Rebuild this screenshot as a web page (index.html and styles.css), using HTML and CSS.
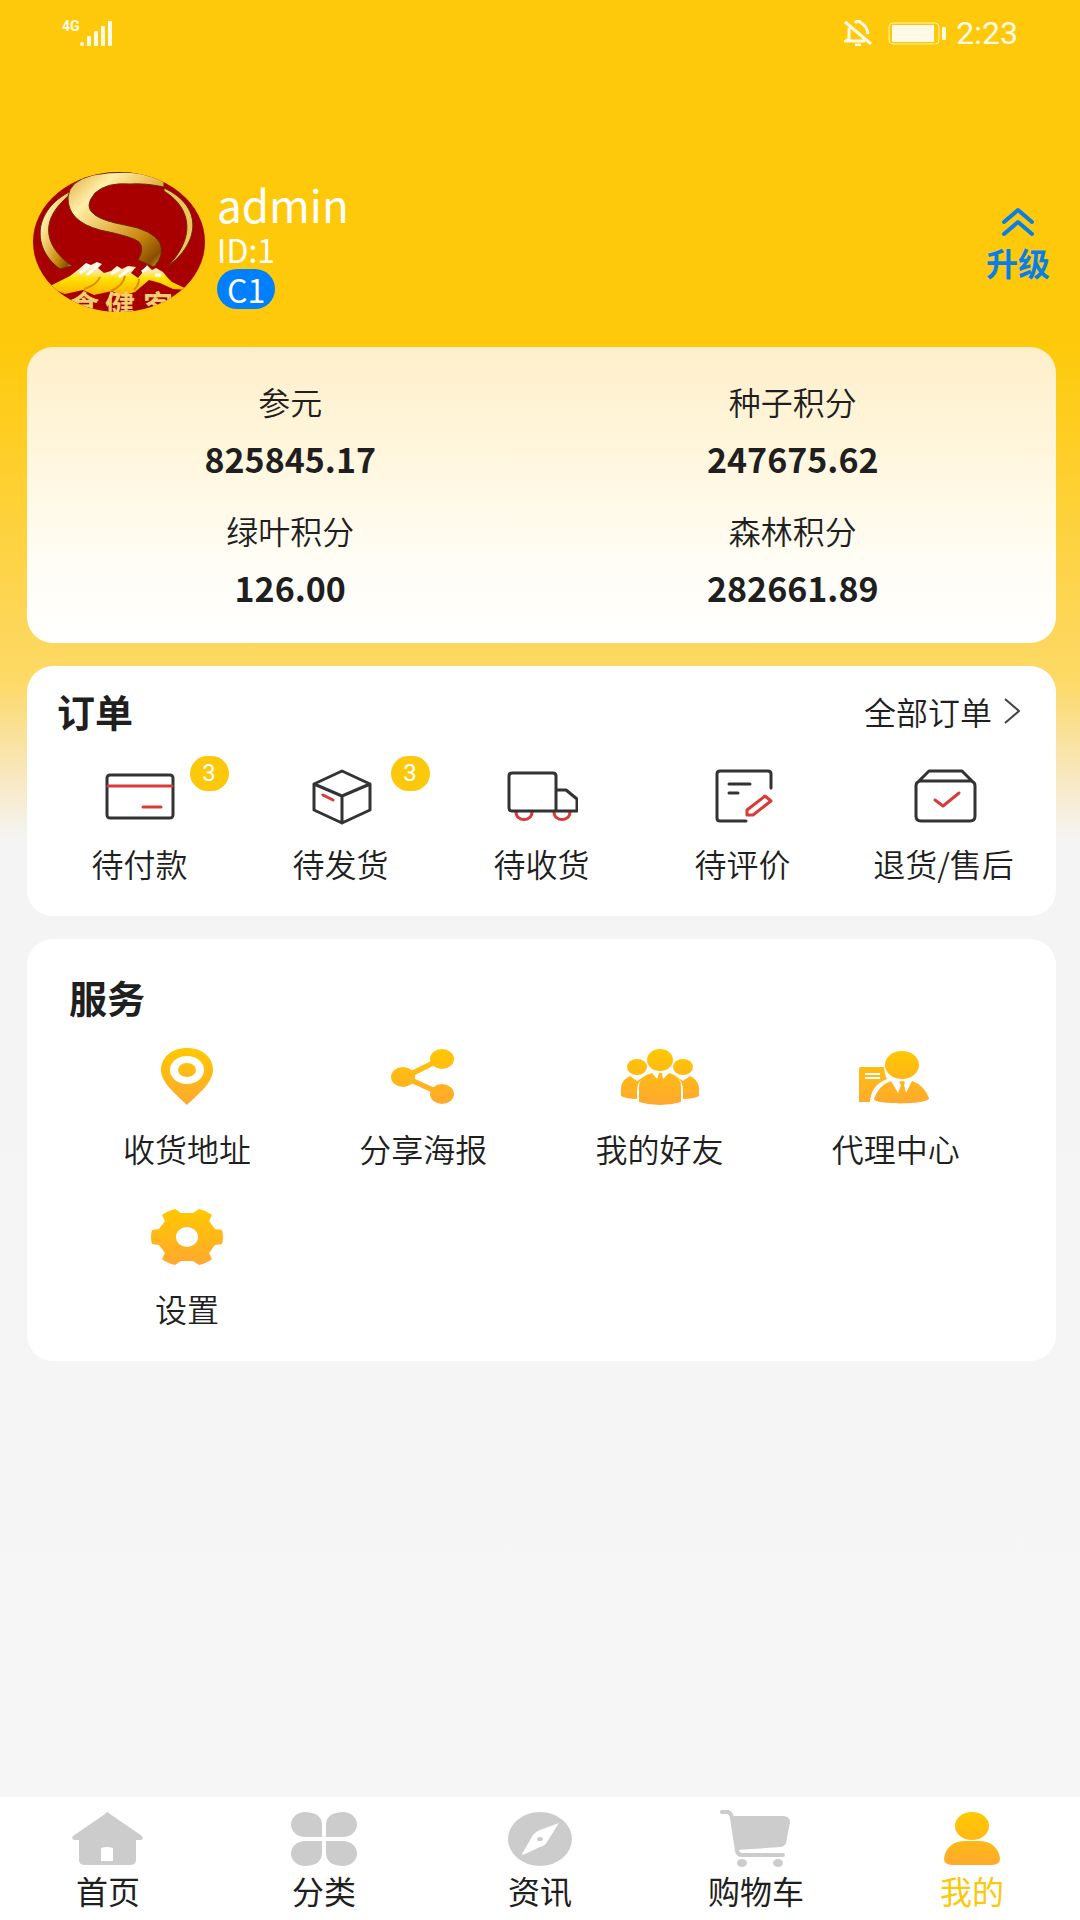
FILE: index.html
```html
<!DOCTYPE html>
<html lang="zh-CN">
<head>
<meta charset="utf-8">
<meta name="viewport" content="width=device-width, initial-scale=1">
<title>我的</title>
<link rel="stylesheet" href="styles.css">
</head>
<body>
<svg class="defs" aria-hidden="true">
  <defs>
    <linearGradient id="amber" gradientUnits="userSpaceOnUse" x1="0" y1="4" x2="0" y2="60">
      <stop offset="0" stop-color="#ffc800"/><stop offset="1" stop-color="#ffa830"/>
    </linearGradient>
    <linearGradient id="gold" x1="0" y1="0" x2="1" y2="1">
      <stop offset="0" stop-color="#e0a53c"/><stop offset=".25" stop-color="#fff0a8"/>
      <stop offset=".5" stop-color="#e8bb50"/><stop offset=".72" stop-color="#c8860c"/><stop offset=".9" stop-color="#8a4c00"/><stop offset="1" stop-color="#e8c050"/>
    </linearGradient>
    <linearGradient id="peak" x1="0" y1="0" x2="0" y2="1">
      <stop offset="0" stop-color="#fff"/><stop offset=".25" stop-color="#ffe9a8"/><stop offset=".5" stop-color="#ffe100"/><stop offset="1" stop-color="#ffae00"/>
    </linearGradient>
    <clipPath id="oval"><ellipse cx="86" cy="70" rx="86" ry="70"/></clipPath>
  </defs>
</svg>

<div class="app">
  <header class="status">
    <div class="status-side">
      <span class="network">4G</span>
      <svg width="32" height="25" viewBox="0 0 32 25" fill="#fffbe8"><circle cx="2" cy="23" r="2"/><rect x="7" y="15" width="4" height="10" rx="1"/><rect x="14" y="10" width="4" height="15" rx="1"/><rect x="21" y="5" width="4" height="20" rx="1"/><rect x="28" y="0" width="4" height="25" rx="1"/></svg>
    </div>
    <div class="status-side">
      <svg width="28" height="26" viewBox="0 0 28 26" fill="none" stroke="#fffbe8" stroke-width="3"><path d="M1 2L27 24M5 8V19L2 21H21M11 3Q14-1 17 3Q23 6 24 14M11 25H17"/></svg>
      <svg class="battery" width="58" height="23" viewBox="0 0 58 23"><rect x="1" y="1" width="50" height="21" rx="4" fill="none" stroke="#fff3b8"/><rect x="4" y="3" width="42" height="17" rx="1" fill="#fff9e6"/><rect x="54" y="5" width="4" height="13" rx="1" fill="#fff9e6"/></svg>
      <time class="clock">2:23</time>
    </div>
  </header>

  <main class="content">
    <section class="profile">
      <svg class="avatar" width="172" height="140" viewBox="0 0 172 140" role="img" aria-label="头像">
        <g clip-path="url(#oval)">
          <rect width="172" height="140" fill="#a80000"/>
          <path d="M38 19C0 38-2 76 27 97L39 94C8 72 8 45 38 22Z" fill="url(#gold)" stroke="#6a2a00"/>
          <path d="M131 16C170 34 168 70 134 95C162 67 160 37 131 19Z" fill="#eec45c" stroke="#6a2a00"/>
          <path d="M131 15Q112 11 97 12Q74 10 62 21Q50 35 62 43Q70 49 92 53Q120 58 127 71Q132 83 121 95L105 88Q112 76 106 70Q101 65 67 58Q34 49 35 25Q36 9 60 3Q90-3 131 4Z" fill="url(#gold)" stroke="#6a2a00"/>
          <path d="M15 115L37 104L46 97L53 91L58 93L64 90L69 92L65 96L71 101L78 99L84 94L89 97L95 94L103 95L98 101L105 106L109 101L114 93L119 98L123 96L130 100L134 105L139 110L156 118L140 117L127 111L116 108L102 120L89 124L79 119L61 123L50 118L32 122Z" fill="url(#peak)"/>
          <path d="M47 101L56 94M54 103L64 94M78 102L87 97M86 105L97 97M109 100L114 96M122 103L128 103" stroke="#fff" stroke-width="3"/>
          <path d="M78 119Q90 114 92 104M51 117Q64 113 67 105M101 118Q106 113 106 107" stroke="#e08a00" stroke-width="2" fill="none"/>
          <text x="36" y="145" class="emblem">食</text><text x="72" y="145" class="emblem">健</text><text x="110" y="145" class="emblem">客</text>
        </g>
      </svg>
      <div class="identity">
        <h1 class="name">admin</h1>
        <div class="uid">ID:1</div>
        <span class="level">C1</span>
      </div>
      <button type="button" class="upgrade">
        <svg width="34" height="30" viewBox="0 0 34 30" fill="none" stroke="#087fe8" stroke-width="4" stroke-linecap="round" stroke-linejoin="round"><path d="M3 15L17 3L31 15M3 27L17 15L31 27"/></svg>
        <span>升级</span>
      </button>
    </section>

    <section class="card balance">
      <dl class="points">
        <div><dt>参元</dt><dd>825845.17</dd></div>
        <div><dt>种子积分</dt><dd>247675.62</dd></div>
        <div><dt>绿叶积分</dt><dd>126.00</dd></div>
        <div><dt>森林积分</dt><dd>282661.89</dd></div>
      </dl>
    </section>

    <section class="card orders">
      <div class="card-head">
        <h2>订单</h2>
        <a class="more" href="#orders">全部订单
          <svg width="16" height="26" viewBox="0 0 16 26" fill="none" stroke="#444" stroke-width="2"><path d="M1 1L15 13L1 25"/></svg>
        </a>
      </div>
      <nav class="order-list" aria-label="订单">
        <a href="#pay"><span class="icon"><svg width="72" height="60" viewBox="0 0 72 60" class="line"><rect x="3" y="9" width="66" height="43" rx="3"/><path class="red" d="M4 20H68M39 41H57"/></svg><span class="badge">3</span></span>待付款</a>
        <a href="#ship"><span class="icon"><svg width="72" height="60" viewBox="0 0 72 60" class="line"><path d="M37 5L65 18V44L37 57L9 44V18ZM9 18L37 30L65 18M37 30V57"/><path class="red" d="M18 29L28 34"/></svg><span class="badge">3</span></span>待发货</a>
        <a href="#receive"><span class="icon"><svg width="72" height="60" viewBox="0 0 72 60" class="line"><path class="red" d="M10 46C10 56 26 56 26 46M48 46C48 56 64 56 64 46"/><path d="M50 45H6Q3 45 3 42V10Q3 7 6 7H47Q50 7 50 10ZM50 24H60L71 33V45H50"/></svg></span>待收货</a>
        <a href="#review"><span class="icon"><svg width="72" height="60" viewBox="0 0 72 60" class="line"><path d="M64 22V8Q64 5 61 5H13Q10 5 10 8V52Q10 55 13 55H39M22 18H43M22 27H31"/><path class="red" d="M58 30L64 35L46 49H40V44Z"/></svg></span>待评价</a>
        <a href="#refund"><span class="icon"><svg width="72" height="60" viewBox="0 0 72 60" class="line"><path d="M10 16L21 5H54L65 16M12 15H63Q67 16 67 20V50Q67 55 62 55H13Q8 55 8 50V20Q8 16 12 15Z"/><path class="red" d="M27 34L35 40L51 27"/></svg></span>退货/售后</a>
      </nav>
    </section>

    <section class="card services">
      <h2>服务</h2>
      <nav class="service-list" aria-label="服务">
        <a href="#address"><svg width="80" height="64" viewBox="0 0 80 64"><path fill="url(#amber)" fill-rule="evenodd" d="M40 60C30 50 14 38 14 25C14 12 25 3 40 3S66 12 66 25C66 38 50 50 40 60ZM40 11A17 14 0 1 0 40 39A17 14 0 1 0 40 11Z"/><ellipse cx="40" cy="25" rx="9" ry="7" fill="url(#amber)"/></svg>收货地址</a>
        <a href="#poster"><svg width="80" height="64" viewBox="0 0 80 64" fill="url(#amber)"><ellipse cx="20" cy="32" rx="12" ry="10"/><ellipse cx="59" cy="14" rx="12" ry="10"/><ellipse cx="59" cy="49" rx="12" ry="10"/><path d="M28 26L48 16L52 20L32 30V34L52 43L48 47L28 38Z"/></svg>分享海报</a>
        <a href="#friends"><svg width="80" height="64" viewBox="0 0 80 64" fill="url(#amber)"><ellipse cx="17" cy="22" rx="10" ry="8"/><ellipse cx="63" cy="22" rx="10" ry="8"/><path d="M10 31L17 36L25 31L22 34Q17 38 17 46V54Q6 54 1 51V44Q1 35 10 31ZM70 31L63 36L56 31L59 34Q63 38 63 46V54Q74 54 79 51V44Q79 35 70 31Z"/><ellipse cx="40" cy="15" rx="13" ry="11"/><path d="M32 28L37 34L39 28H42L43 34L49 28Q61 31 61 42V57Q51 60 40 60T19 57V42Q19 31 32 28Z"/></svg>我的好友</a>
        <a href="#agent"><svg width="80" height="64" viewBox="0 0 80 64" fill="url(#amber)"><path d="M5 22H28Q29 31 31 34Q15 40 14 57H3V24Q3 22 5 22ZM9 28V30H24V28ZM9 32V34H24V32Z" fill-rule="evenodd"/><ellipse cx="46" cy="20" rx="17" ry="14"/><path d="M35 36L42 48L45 40L43 37Q46 35 49 37L48 40L50 48L56 36Q68 40 73 53C74 60 18 60 18 54Q23 40 35 36Z"/></svg>代理中心</a>
        <a href="#settings"><svg width="80" height="64" viewBox="0 0 80 64"><path fill="url(#amber)" fill-rule="evenodd" d="M12 24L18 16L15 10Q20 6 28 4L34 8H46L52 4Q60 6 65 10L62 16L68 24L75 25Q77 32 75 39L68 40L62 48L65 54Q60 58 52 60L46 56H34L28 60Q20 58 15 54L18 48L12 40L5 39Q3 32 5 25ZM40 22A11 10 0 1 0 40 42A11 10 0 1 0 40 22Z"/></svg>设置</a>
      </nav>
    </section>
  </main>

  <nav class="tabbar" aria-label="主导航">
    <a href="#home"><svg width="72" height="60" viewBox="0 0 72 60" fill="#ccc"><path fill-rule="evenodd" d="M35 3Q36 3 38 5L70 27Q72 30 69 31H64V51Q64 56 58 56H13Q7 56 7 51V31H2Q-1 30 1 27L33 5ZM29 39V52H41V39Q35 37 29 39Z"/></svg>首页</a>
    <a href="#category"><svg width="72" height="60" viewBox="0 0 72 60" fill="#ccc"><path d="M34 28H18C-2 28-2 3 18 3Q34 4 34 16ZM38 28V16Q38 4 54 3C74 3 74 28 54 28ZM34 32V44Q34 56 18 57C-2 57-2 32 18 32ZM38 32H54C74 32 74 57 54 57Q38 56 38 44Z"/></svg>分类</a>
    <a href="#news"><svg width="72" height="60" viewBox="0 0 72 60"><ellipse cx="36" cy="30" rx="32" ry="27" fill="#ccc"/><path d="M18 45L29 26Q31 23 36 21L55 14L43 33Q41 37 36 38L19 46Z" fill="#fff"/><ellipse cx="36" cy="30" rx="3" ry="2" fill="#ccc"/></svg>资讯</a>
    <a href="#cart"><svg width="72" height="60" viewBox="0 0 72 60"><path d="M2 3H8Q11 4 12 9L17 42Q18 46 22 46H63" fill="none" stroke="#ccc" stroke-width="4" stroke-linecap="round"/><path d="M11 7H64Q70 8 70 13L66 34Q65 37 61 38L16 41Z" fill="#ccc"/><ellipse cx="22" cy="54" rx="5" ry="4" fill="#ccc"/><ellipse cx="58" cy="54" rx="5" ry="4" fill="#ccc"/></svg>购物车</a>
    <a class="active" href="#me" aria-current="page"><svg width="72" height="60" viewBox="0 0 72 60" fill="url(#amber)"><ellipse cx="36" cy="17" rx="17" ry="14"/><path d="M8 50C9 39 17 32 29 32H43C55 32 63 39 64 50Q64 56 54 56H18Q8 56 8 50Z"/></svg>我的</a>
  </nav>
</div>
</body>
</html>
```
FILE: styles.css
```css
* { box-sizing: border-box; }

body {
  margin: 0;
  background: #f5f5f5;
  color: #1f1f1f;
  font: 350 32px/46px "Noto Sans CJK SC", "Noto Sans", sans-serif;
}

h1, h2, dl, dd { margin: 0; }
a { color: inherit; text-decoration: none; }
svg { display: block; flex: none; }
.defs { position: absolute; width: 0; height: 0; }

.app {
  display: flex;
  flex-direction: column;
  min-height: 100vh;
  background: linear-gradient(#fec90a 340px, #fdd75c 640px, #fdd966 680px, #f9e3a8 750px, #f5f4f5 840px, #f6f6f6 100%);
}

.status {
  display: flex;
  justify-content: space-between;
  padding: 10px 62px 0;
  color: #fffbe8;
}
.status-side { display: flex; align-items: center; }
.network {
  align-self: flex-start;
  font: bold 14px/32px Roboto, sans-serif;
}
.battery { margin: 0 10px 0 16px; }
.clock { font-family: Roboto, sans-serif; font-weight: 400; }

.content {
  flex: 1;
  display: flex;
  flex-direction: column;
  gap: 23px;
  padding: 116px 24px 23px 27px;
}

.profile {
  display: flex;
  gap: 12px;
  padding: 0 6px 12px;
  color: #fff;
  font-weight: 400;
}
.emblem { fill: #f0cf70; font-size: 30px; font-weight: bold; }
.identity {
  flex: 1;
  display: flex;
  flex-direction: column;
  align-items: flex-start;
  padding-top: 6px;
}
.name { font-size: 44px; line-height: 52px; font-weight: 400; }
.uid { line-height: 39px; }
.level {
  padding: 0 10px;
  border-radius: 20px;
  background: #0080ff;
  line-height: 40px;
}
.upgrade {
  display: flex;
  flex-direction: column;
  align-items: center;
  gap: 6px;
  padding: 35px 0 0;
  border: 0;
  background: none;
  color: #087fe8;
  font: bold 32px/38px "Noto Sans CJK SC", sans-serif;
}

.card {
  border-radius: 26px;
  background: #fff;
}
.card h2 { font-size: 38px; font-weight: 700; }

.balance {
  padding: 31px 12px 32px;
  background: linear-gradient(#feefcb, #fff6dc 35%, #fffdf6 75%, #fff);
}
.points {
  display: grid;
  grid-template-columns: 1fr 1fr;
  gap: 25px 0;
  text-align: center;
}
.points div { display: grid; gap: 12px; }
.points dd { font-size: 34px; font-weight: 700; }

.orders { padding: 22px 12px 30px; }
.card-head {
  display: flex;
  justify-content: space-between;
  align-items: center;
  padding: 0 24px 0 18px;
}
.more { display: flex; align-items: center; gap: 12px; }
.order-list {
  display: grid;
  grid-template-columns: repeat(5, 1fr);
  margin-top: 32px;
}
.order-list a, .service-list a, .tabbar a {
  display: flex;
  flex-direction: column;
  align-items: center;
}
.order-list a { gap: 14px; }
.icon { position: relative; }
.line { fill: none; stroke: #333; stroke-width: 3; stroke-linecap: round; stroke-linejoin: round; }
.red { stroke: #d93a3a; }
.badge {
  position: absolute;
  left: 86px;
  top: -10px;
  width: 39px;
  border-radius: 18px;
  background: #fcc80c;
  color: #fff;
  font: 24px/35px Roboto, sans-serif;
  text-align: center;
}

.services { padding: 35px 42px 30px; }
.service-list {
  display: grid;
  grid-template-columns: repeat(4, 1fr);
  gap: 34px 0;
  margin-top: 25px;
}
.service-list a { gap: 16px; }

.tabbar {
  position: sticky;
  bottom: 0;
  display: grid;
  grid-template-columns: repeat(5, 1fr);
  padding: 12px 0 9px;
  background: #fff;
  font-weight: 400;
  line-height: 42px;
}
.active { color: #fcc80c; }
```
